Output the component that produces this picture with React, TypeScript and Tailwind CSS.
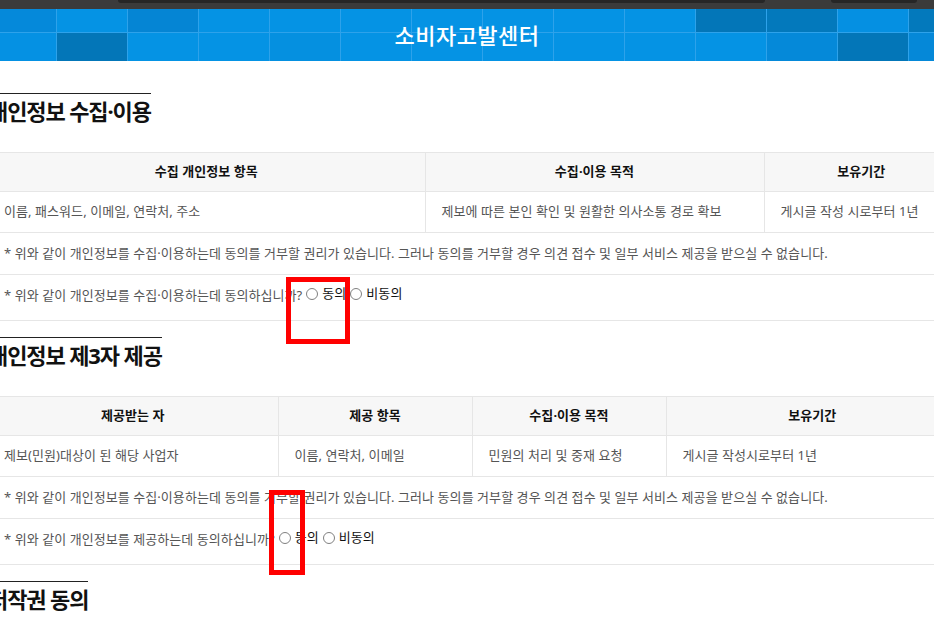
import React from 'react';

// tile shades for the banner (two rows of 14 tiles, 71px each)
const TILE_ROWS: string[][] = [
  ['bg-[#0589da]', 'bg-[#0593e4]', 'bg-[#0585d4]', 'bg-[#0593e4]', 'bg-[#0593e4]', 'bg-[#0593e4]', 'bg-[#0593e4]', 'bg-[#0593e4]', 'bg-[#0593e4]', 'bg-[#0593e4]', 'bg-[#0376b8]', 'bg-[#0379bc]', 'bg-[#0590e2]', 'bg-[#0379bc]'],
  ['bg-[#0591e3]', 'bg-[#0376b8]', 'bg-[#0593e4]', 'bg-[#0593e4]', 'bg-[#0590e0]', 'bg-[#0593e4]', 'bg-[#0593e4]', 'bg-[#0593e4]', 'bg-[#0593e4]', 'bg-[#0593e4]', 'bg-[#0593e4]', 'bg-[#0589d9]', 'bg-[#0376b8]', 'bg-[#0588d8]'],
];

const Banner = () => (
  <div className="relative h-[52px] overflow-hidden bg-[#0593e4]">
    <div className="-ml-[14px] flex flex-col">
      {TILE_ROWS.map((row, r) => (
        <div key={r} className={`flex ${r === 0 ? 'h-[23px]' : 'h-[30px] border-t border-[#2ea2ea]'}`}>
          {row.map((c, i) => (
            <div key={i} className={`w-[71px] shrink-0 border-r border-[#2ea2ea] ${c}`} />
          ))}
        </div>
      ))}
    </div>
    <h1 className="absolute inset-0 flex items-center justify-center pt-[1px] text-[22px] font-medium tracking-[0.02em] text-white">
      소비자고발센터
    </h1>
  </div>
);

const Radio = ({ label }: { label: string }) => (
  <label className="inline-flex items-center">
    <span className="mx-[4px] inline-block h-[12px] w-[12px] rounded-full border border-[#808080] bg-white" />
    <span className="text-[#111]">{label}</span>
  </label>
);

const Heading = ({ children }: { children: React.ReactNode }) => (
  <h2 className="inline-block border-t border-[#222] pt-[3px] text-[22px] font-bold leading-[28px] tracking-[-0.05em] text-[#111]">
    {children}
  </h2>
);

const NOTE = '* 위와 같이 개인정보를 수집·이용하는데 동의를 거부할 권리가 있습니다. 그러나 동의를 거부할 경우 의견 접수 및 일부 서비스 제공을 받으실 수 없습니다.';

const Section = ({
  title,
  cols,
  rows,
  question,
  top,
}: {
  title: string;
  cols: { head: string; w: string }[];
  rows: string[];
  question: string;
  top: string;
}) => (
  <section className={top}>
    <Heading>{title}</Heading>
    <table className="mt-[26px] w-[970px] table-fixed border-collapse text-[13px] tracking-[0.005em]">
      <colgroup>
        {cols.map((c) => (
          <col key={c.head} className={c.w} />
        ))}
      </colgroup>
      <thead>
        <tr className="h-[39px] border-y border-[#e6e6e6] bg-[#f7f7f7]">
          {cols.map((c, i) => (
            <th
              key={c.head}
              className={`font-bold text-[#111] ${i < cols.length - 1 ? 'border-r border-[#e6e6e6]' : ''}`}
            >
              {c.head}
            </th>
          ))}
        </tr>
      </thead>
      <tbody className="text-[#555]">
        <tr className="h-[41px] border-b border-[#e6e6e6]">
          {rows.map((v, i) => (
            <td
              key={i}
              className={`pl-[16px] text-left ${i < rows.length - 1 ? 'border-r border-[#e6e6e6]' : ''}`}
            >
              {v}
            </td>
          ))}
        </tr>
        <tr className="h-[42px] border-b border-[#e6e6e6]">
          <td colSpan={cols.length} className="pl-[16px]">
            {NOTE}
          </td>
        </tr>
        <tr className="h-[46px] border-b border-[#e6e6e6]">
          <td colSpan={cols.length} className="pb-[6px] pl-[16px]">
            <span>{question}</span>
            <Radio label="동의" />
            <Radio label="비동의" />
          </td>
        </tr>
      </tbody>
    </table>
  </section>
);

export default function App() {
  return (
    <div
      className="relative min-h-[639px] w-[934px] overflow-hidden bg-white"
      style={{ fontFamily: '"Noto Sans", "Noto Sans CJK KR", sans-serif' }}
    >
      {/* browser chrome strip */}
      <div className="flex h-[9px] bg-[#3b3b3b]">
        <div className="ml-[118px] h-[3px] w-[647px] rounded-b-[6px] bg-[#262626]" />
        <div className="ml-[66px] h-[3px] w-[86px] rounded-b-[6px] bg-[#262626]" />
      </div>
      <Banner />

      <div className="-ml-[12px] w-[970px]">
        <Section
          top="pt-[32px]"
          title="개인정보 수집·이용"
          cols={[
            { head: '수집 개인정보 항목', w: 'w-[437px]' },
            { head: '수집·이용 목적', w: 'w-[339px]' },
            { head: '보유기간', w: 'w-[194px]' },
          ]}
          rows={['이름, 패스워드, 이메일, 연락처, 주소', '제보에 따른 본인 확인 및 원활한 의사소통 경로 확보', '게시글 작성 시로부터 1년']}
          question="* 위와 같이 개인정보를 수집·이용하는데 동의하십니까?"
        />
        <Section
          top="pt-[16px]"
          title="개인정보 제3자 제공"
          cols={[
            { head: '제공받는 자', w: 'w-[290px]' },
            { head: '제공 항목', w: 'w-[194px]' },
            { head: '수집·이용 목적', w: 'w-[194px]' },
            { head: '보유기간', w: 'w-[292px]' },
          ]}
          rows={['제보(민원)대상이 된 해당 사업자', '이름, 연락처, 이메일', '민원의 처리 및 중재 요청', '게시글 작성시로부터 1년']}
          question="* 위와 같이 개인정보를 제공하는데 동의하십니까?"
        />
        <section className="pt-[16px]">
          <Heading>저작권 동의</Heading>
        </section>
      </div>

      {/* red highlight boxes drawn over the page */}
      <div className="absolute left-[286px] top-[277px] h-[67px] w-[64px] border-[5px] border-[#ff0000]" />
      <div className="absolute left-[269px] top-[490px] h-[85px] w-[36px] border-[5px] border-[#ff0000]" />
    </div>
  );
}
